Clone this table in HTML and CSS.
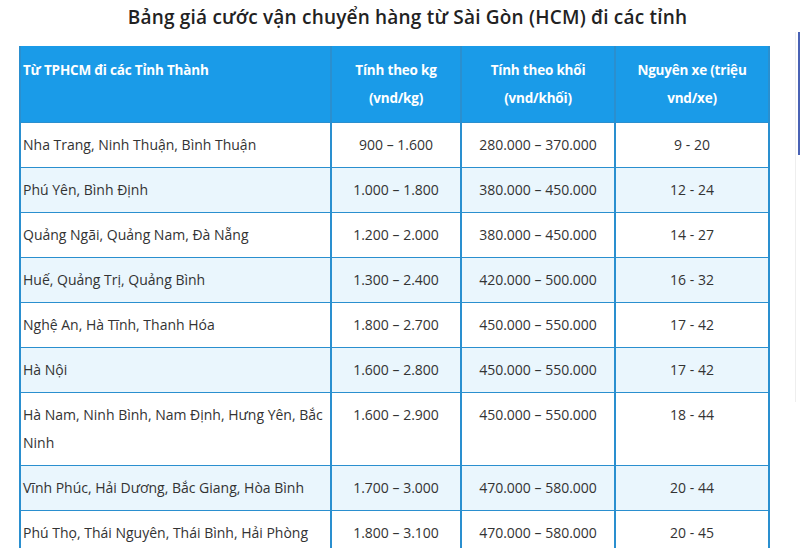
FILE: index.html
```html
<!DOCTYPE html>
<html lang="vi">
<head>
<meta charset="utf-8">
<title>Bảng giá cước vận chuyển</title>
<link rel="stylesheet" href="styles.css">
</head>
<body>
<div class="page">
  <main class="content">
    <h2 class="title">Bảng giá cước vận chuyển hàng từ Sài Gòn (HCM) đi các tỉnh</h2>
    <table class="price">
      <colgroup>
        <col class="w1">
        <col class="w2">
        <col class="w3">
        <col class="w4">
      </colgroup>
      <thead>
        <tr>
          <th class="c1">Từ TPHCM đi các Tỉnh Thành</th>
          <th>Tính theo kg (vnd/kg)</th>
          <th>Tính theo khối (vnd/khối)</th>
          <th>Nguyên xe (triệu vnd/xe)</th>
        </tr>
      </thead>
      <tbody>
        <tr><td>Nha Trang, Ninh Thuận, Bình Thuận</td><td>900 – 1.600</td><td>280.000 – 370.000</td><td>9 - 20</td></tr>
        <tr><td>Phú Yên, Bình Định</td><td>1.000 – 1.800</td><td>380.000 – 450.000</td><td>12 - 24</td></tr>
        <tr><td>Quảng Ngãi, Quảng Nam, Đà Nẵng</td><td>1.200 – 2.000</td><td>380.000 – 450.000</td><td>14 - 27</td></tr>
        <tr><td>Huế, Quảng Trị, Quảng Bình</td><td>1.300 – 2.400</td><td>420.000 – 500.000</td><td>16 - 32</td></tr>
        <tr><td>Nghệ An, Hà Tĩnh, Thanh Hóa</td><td>1.800 – 2.700</td><td>450.000 – 550.000</td><td>17 - 42</td></tr>
        <tr><td>Hà Nội</td><td>1.600 – 2.800</td><td>450.000 – 550.000</td><td>17 - 42</td></tr>
        <tr><td>Hà Nam, Ninh Bình, Nam Định, Hưng Yên, Bắc Ninh</td><td>1.600 – 2.900</td><td>450.000 – 550.000</td><td>18 - 44</td></tr>
        <tr><td>Vĩnh Phúc, Hải Dương, Bắc Giang, Hòa Bình</td><td>1.700 – 3.000</td><td>470.000 – 580.000</td><td>20 - 44</td></tr>
        <tr><td>Phú Thọ, Thái Nguyên, Thái Bình, Hải Phòng</td><td>1.800 – 3.100</td><td>470.000 – 580.000</td><td>20 - 45</td></tr>
      </tbody>
    </table>
  </main>
  <aside class="side">
    <div class="side-card"></div>
  </aside>
</div>
</body>
</html>
```

FILE: styles.css
```css
html, body {
  margin: 0;
  padding: 0;
  background: #ffffff;
  overflow: hidden;
}
body {
  font-family: "Open Sans", "Noto Sans", sans-serif;
  color: #333333;
}
.page {
  display: flex;
  width: 800px;
  height: 548px;
  overflow: hidden;
}
.content {
  width: 749px;
  padding: 0 0 0 19px;
  flex: none;
}
.title {
  margin: 0;
  height: 46px;
  box-sizing: border-box;
  padding: 4px 0 0 28px;
  text-align: center;
  font-size: 19px;
  font-weight: 600;
  letter-spacing: 0.2px;
  color: #222222;
  line-height: 26px;
}
.price {
  width: 749px;
  border-collapse: collapse;
  table-layout: fixed;
  font-size: 14px;
  line-height: 28px;
}
.w1 { width: 311px; }
.w2 { width: 130px; }
.w3 { width: 154px; }
.w4 { width: 154px; }
.price th {
  background: #1a9be8;
  color: #ffffff;
  font-weight: 700;
  font-size: 13.5px;
  letter-spacing: -0.2px;
  padding: 10px 2px;
  border: 2px solid #2a8fcf;
  border-top: none;
  border-bottom: none;
  text-align: center;
  vertical-align: top;
}
.price th.c1 { text-align: left; }
.price td {
  border: 2px solid #2a8fcf;
  border-top-width: 1px;
  border-bottom-width: 1px;
  padding: 8px 2px;
  text-align: center;
  vertical-align: top;
  color: #333333;
}
.price td:first-child { text-align: left; }
.price tbody tr:nth-child(even) td { background: #eaf6fd; }
.side {
  flex: 1;
  display: flex;
  justify-content: flex-end;
  padding-top: 32px;
}
.side-card {
  width: 4px;
  height: 370px;
  border-left: 1px solid #eeeeee;
  position: relative;
}
.side-card::before {
  content: "";
  position: absolute;
  right: 0;
  top: 0;
  width: 2px;
  height: 123px;
  background: #4a63b5;
}
```
